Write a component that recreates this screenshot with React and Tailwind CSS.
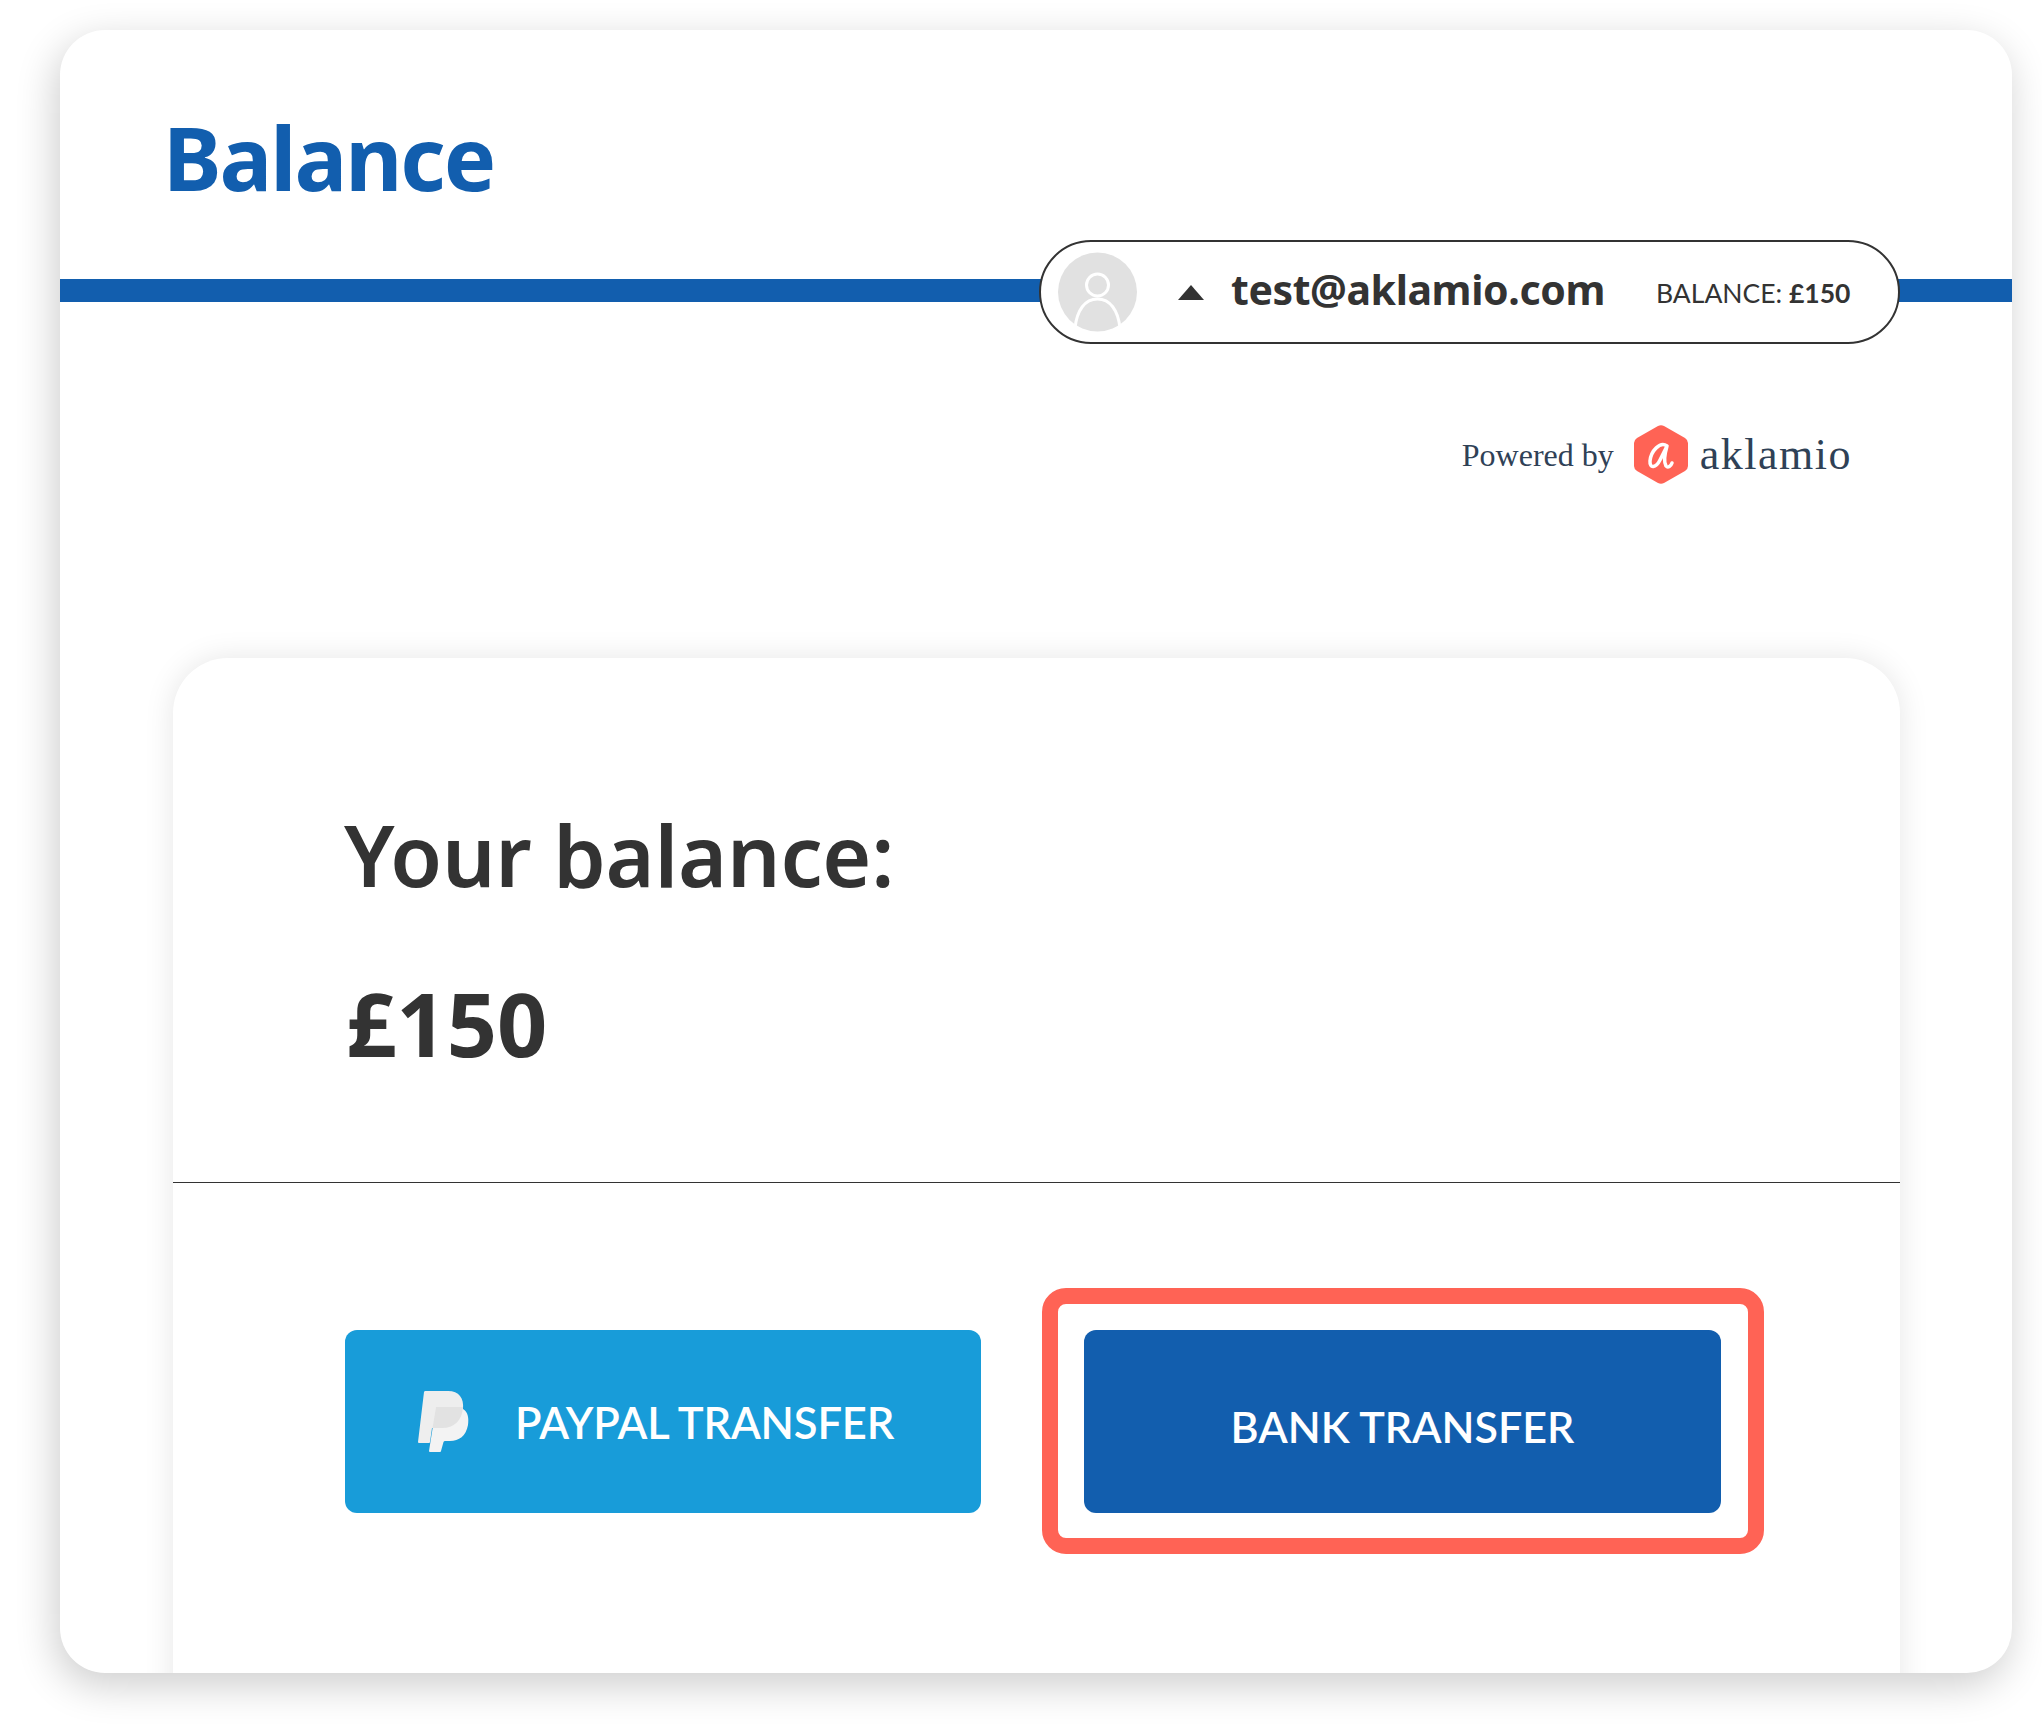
import React from 'react';

const PaypalIcon = () => (
  <svg width="51" height="61" viewBox="0 0 51 61">
    <path d="M6 1 Q6.3 0 7.5 0 H30 C41 0 46 7 45 18 C44 30 36 37 24 37 H14 L12 51 Q12 52 11 52 H1 Q0 52 0 51 Z" fill="#eeeeee" />
    <path d="M45 18 C50 21 51 27 50 34 C48 45 41 50 32 50 H27 Q26 50 25.500 51 L23 60 Q23 61 22 61 H12 Q11 61 11 60 L18 16 H45 Z" fill="#f3f3f3" />
    <path d="M18 16 H45 C44 30 36 37 24 37 H14.500 Z" fill="#e2e2e2" />
  </svg>
);

const AvatarIcon = () => (
  <svg width="79" height="80" viewBox="0 0 79 80">
    <circle cx="39.500" cy="40" r="39.500" fill="#e1e1e1" />
    <circle cx="39.500" cy="33" r="11" fill="none" stroke="#ffffff" strokeWidth="3" />
    <path d="M17 76 C19 58 27 47 39.500 47 C52 47 60 58 62 76" fill="none" stroke="#ffffff" strokeWidth="3" />
  </svg>
);

const AklamioLogo = () => (
  <svg width="54" height="59" viewBox="0 0 54 59">
    <path d="M24 1 Q27 -0.500 30 1 L51 13 Q54 15 54 18 V41 Q54 44 51 46 L30 58 Q27 59.500 24 58 L3 46 Q0 44 0 41 V18 Q0 15 3 13 Z" fill="#ff6355" />
    <path d="M33 21 C26 16 17 26 16 36 C15.500 44 22 43 26 35 C29 29 31 25 33 21 C31 28 29 36 32 41 C34 43.500 37 41 38 38" fill="none" stroke="#ffffff" strokeWidth="3.500" strokeLinecap="round" strokeLinejoin="round" />
  </svg>
);

export default function App() {
  return (
    <div className="w-[2042px] h-[1733px] bg-white pt-[30px] pl-[60px] font-['Noto_Sans',sans-serif] text-[#333333] overflow-hidden">
      <div className="w-[1952px] h-[1643px] bg-white rounded-[45px] overflow-hidden shadow-[-4px_12px_40px_rgba(0,0,0,0.2)] relative">
        <div className="h-[249px] pl-[103px] pt-[83px]">
          <h1 className="text-[88px] leading-[88px] font-bold text-[#125eae] tracking-[-2px]">Balance</h1>
        </div>

        <div className="h-[23px] bg-[#125eae] flex items-center justify-end pr-[112px]">
          <div className="w-[861px] h-[104px] mt-[3px] shrink-0 bg-white border-2 border-[#333333] rounded-[52px] flex items-center pl-[17px]">
            <AvatarIcon />
            <div className="ml-[41px] w-0 h-0 border-l-[13px] border-r-[13px] border-b-[15px] border-l-transparent border-r-transparent border-b-[#333333]"></div>
            <span className="ml-[27px] text-[41px] font-bold leading-none tracking-[-0.4px] -mt-[5px]">test@aklamio.com</span>
            <span className="ml-[51px] mt-[2px] text-[26.5px] leading-none font-['Lato',sans-serif]">BALANCE: <b>£150</b></span>
          </div>
        </div>

        <div className="flex items-center justify-end pr-[160px] mt-[123px] h-[59px] font-['Liberation_Serif',serif] text-[#2f4156]">
          <span className="text-[32px] leading-none">Powered by</span>
          <div className="ml-[20px] mr-[12px]"><AklamioLogo /></div>
          <span className="text-[44px] leading-none tracking-[1.5px]">aklamio</span>
        </div>

        <div className="ml-[113px] w-[1727px] h-[1100px] mt-[174px] bg-white rounded-t-[55px] shadow-[0_0_30px_rgba(0,0,0,0.1)]">
          <div className="h-[525px] border-b border-[#333333] pl-[171px] pt-[152px]">
            <p className="text-[84px] leading-[90px] font-semibold tracking-[-0.2px]">Your balance:</p>
            <p className="text-[88px] leading-[90px] font-bold mt-[78px] ml-[2px]">£150</p>
          </div>
          <div className="flex pl-[172px] pt-[147px] font-['Lato',sans-serif]">
            <button className="w-[636px] h-[183px] bg-[#189cd9] rounded-[12px] text-white flex items-center pl-[73px] shrink-0">
              <PaypalIcon />
              <span className="ml-[46px] mt-[2px] text-[43.5px] leading-none font-semibold tracking-[-0.15px]">PAYPAL TRANSFER</span>
            </button>
            <div className="ml-[61px] -mt-[42px] w-[722px] h-[266px] border-[16px] border-[#ff6355] rounded-[24px] pl-[26px] pt-[26px] shrink-0">
              <button className="w-[637px] h-[183px] bg-[#125eae] rounded-[12px] text-white flex items-center justify-center pt-[10px]">
                <span className="text-[43px] leading-none font-semibold">BANK TRANSFER</span>
              </button>
            </div>
          </div>
        </div>
      </div>
    </div>
  );
}
